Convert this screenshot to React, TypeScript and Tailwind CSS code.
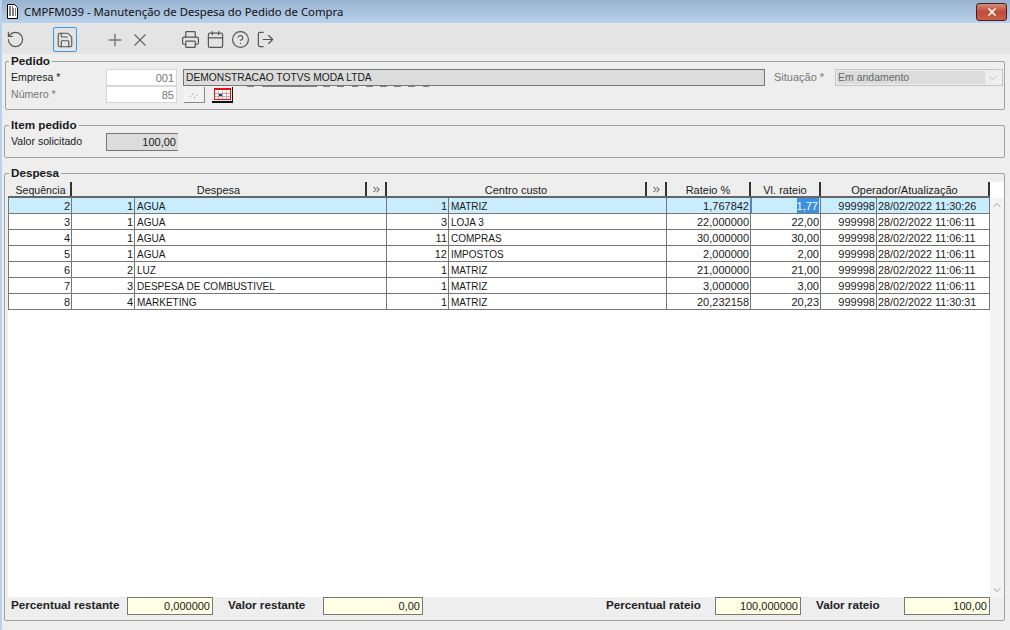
import { Calendar, ChevronDown, ChevronUp, ChevronsRight, CircleHelp, LogOut, Plus, Printer, RotateCcw, Save, X } from "lucide-react";

const rows = [
    ["2", "1", "AGUA", "1", "MATRIZ", "1,767842", "1,77", "999998", "28/02/2022 11:30:26"],
    ["3", "1", "AGUA", "3", "LOJA 3", "22,000000", "22,00", "999998", "28/02/2022 11:06:11"],
    ["4", "1", "AGUA", "11", "COMPRAS", "30,000000", "30,00", "999998", "28/02/2022 11:06:11"],
    ["5", "1", "AGUA", "12", "IMPOSTOS", "2,000000", "2,00", "999998", "28/02/2022 11:06:11"],
    ["6", "2", "LUZ", "1", "MATRIZ", "21,000000", "21,00", "999998", "28/02/2022 11:06:11"],
    ["7", "3", "DESPESA DE COMBUSTIVEL", "1", "MATRIZ", "3,000000", "3,00", "999998", "28/02/2022 11:06:11"],
    ["8", "4", "MARKETING", "1", "MATRIZ", "20,232158", "20,23", "999998", "28/02/2022 11:30:31"],
];

const colWidths = ["w-[63px]", "w-[63px]", "w-[252px]", "w-[62px]", "w-[218px]", "w-[84px]", "w-[70px]", "w-[56px]", "w-[113px]"];
const leftAligned = [2, 4];

function HeaderCell({label, width, more}: { label: string, width: string, more?: boolean }) {
    return <div className={`${width} flex h-full shrink-0 border-r-2 border-[#333]`}>
        <div className="flex-1 text-center leading-[16px]">{label}</div>
        {more && <div className="flex w-[20px] items-center justify-center border-l-2 border-[#333]">
            <ChevronsRight size={11} strokeWidth={2} className="text-[#222]"/>
        </div>}
    </div>
}

function Row({row, index}: { row: string[], index: number }) {
    const selected = index === 0;
    return <div className={`flex h-[16px] border-b border-[#777] ${selected ? "bg-[#c9edfd]" : "bg-white"}`}>
        {row.map((value, key) => {
            const active = selected && key === 6;
            return <div key={key}
                        className={`${colWidths[key]} shrink-0 overflow-hidden whitespace-nowrap border-r border-[#777] leading-[17px] ${leftAligned.includes(key) ? "pl-[2px] text-left text-[10px]" : key === 8 ? "pl-[1px] text-[10.8px]" : "pr-[1px] text-right"} ${active ? "border-l border-l-[#3a8ee0]" : ""}`}>
                {active ? <span className="inline-block h-[15px] bg-[#3d8fe0] pr-[1px] leading-[16px] text-white">{value}</span> : value}
            </div>
        })}
    </div>
}

function Total({label, value, labelWidth, inputWidth}: { label: string, value: string, labelWidth: string, inputWidth: string }) {
    return <div className="flex items-start">
        <div className={`${labelWidth} text-[11.7px] font-bold leading-[16px] text-[#222]`}>{label}</div>
        <div className={`${inputWidth} h-[18px] border border-[#777] bg-[#ffffe6] pr-[2px] text-right leading-[17px]`}>{value}</div>
    </div>
}

export default function App() {
    return <div className="flex h-[630px] w-[1010px] flex-col overflow-hidden border-l-2 border-[#b9d1ea] bg-[#eeeeee] text-[11px] text-[#1a1a1a] [font-family:'Liberation_Sans',Arial,sans-serif]">
        <div className="-ml-[2px] flex h-[23px] shrink-0 items-center bg-gradient-to-b from-[#98b3d0] to-[#b9d1ea] pl-[6px]">
            <svg width="13" height="15" viewBox="0 0 13 15" className="mr-[5px]">
                <path d="M1.5 .5h7l3 3v11h-10z" fill="#fff" stroke="#000"/>
                <path d="M3 3h4M3 5h7M3 7h7M3 9h7M3 11h7" stroke="#000" strokeDasharray="2 1"/>
            </svg>
            <span className="text-[11.35px] text-[#111] [font-family:'Noto_Sans',sans-serif]">CMPFM039 - Manutenção de Despesa do Pedido de Compra</span>
            <div className="ml-auto mr-[3px] flex h-[18px] w-[31px] items-center justify-center rounded-[3px] border border-[#4a1c24] bg-gradient-to-b from-[#d3897a] via-[#bf4a33] to-[#c9614c]">
                <X size={12} strokeWidth={3.5} className="text-white"/>
            </div>
        </div>

        <div className="-ml-[2px] flex h-[31px] shrink-0 items-center bg-[#e4e4e4] pt-[2px] text-[#555]">
            <RotateCcw size={19} strokeWidth={1.5} className="ml-[6px]"/>
            <div className="ml-[28px] flex h-[25px] w-[24px] items-center justify-center rounded-[2px] border border-[#3d97ee]">
                <Save size={18} strokeWidth={1.5}/>
            </div>
            <Plus size={20} strokeWidth={1.7} className="ml-[28px] text-[#777]"/>
            <X size={20} strokeWidth={1.5} className="ml-[5px] text-[#666]"/>
            <Printer size={19} strokeWidth={1.5} className="ml-[31px]"/>
            <Calendar size={19} strokeWidth={1.5} className="ml-[6px]"/>
            <CircleHelp size={19} strokeWidth={1.5} className="ml-[6px]"/>
            <LogOut size={19} strokeWidth={1.5} className="ml-[6px]"/>
        </div>

        <div className="relative ml-[3px] mr-[5px] mt-[7px] h-[49px] shrink-0 rounded-[2px] border border-[#a0a0a0]">
            <div className="absolute -top-[8px] left-[3px] bg-[#eeeeee] px-[2px] text-[11.7px] font-bold leading-[14px]">Pedido</div>
            <div className="ml-[5px] mt-[7px] flex h-[17px]">
                <div className="w-[95px] text-[10.6px] leading-[16px]">Empresa *</div>
                <div className="h-[17px] w-[71px] border border-[#d8d8d8] bg-white pr-[2px] text-right leading-[16px] text-[#777]">001</div>
                <div className="relative ml-[6px] h-[17px] w-[582px] border border-[#777] bg-[#dcdcdc] pl-[2px] text-[10.25px] leading-[15px]">
                    DEMONSTRACAO TOTVS MODA LTDA
                    <svg width="185" height="1" viewBox="0 0 185 1" className="absolute -bottom-[2px] left-[63px]">
                        <path d="M0 .5h7M15 .5h55M76 .5h7M90 .5h7M105 .5h6M119 .5h7M133 .5h7M147 .5h7M161 .5h7M176 .5h6" stroke="#808080"/>
                    </svg>
                </div>
                <div className="ml-[9px] w-[61px] leading-[16px] text-[#777]">Situação *</div>
                <div className="flex h-[17px] w-[168px] items-center border border-[#c4c4c4] bg-[#eeeeee] p-[1px] text-[#666]">
                    <div className="h-full flex-1 bg-[#dcdcdc] pl-[1px] text-[10.5px] leading-[13px]">Em andamento</div>
                    <ChevronDown size={12} strokeWidth={1} className="mx-[2px] text-[#888]"/>
                </div>
            </div>
            <div className="ml-[5px] flex h-[17px]">
                <div className="w-[95px] text-[10.6px] leading-[17px] text-[#777]">Número *</div>
                <div className="h-[17px] w-[71px] border border-[#d8d8d8] bg-white pr-[2px] text-right leading-[16px] text-[#777]">85</div>
                <div className="ml-[7px] mt-[1px] flex h-[16px] w-[21px] items-center justify-center border-b border-r border-[#888] bg-[#f2f2f2]">
                    <svg width="12" height="10" viewBox="0 0 12 10">
                        <path d="M2 7l4-4M6 8l4-4" stroke="#999" strokeDasharray="1.5 1"/>
                    </svg>
                </div>
                <div className="ml-[7px] mt-[1px] flex h-[16px] w-[21px] items-start justify-center border-b-2 border-r border-[#111] pt-[1px]">
                    <svg width="17" height="12" viewBox="0 0 17 12">
                        <rect width="17" height="12" fill="#fff"/>
                        <path d="M4.5 3v8M8.5 3v8M12.5 3v8M1 5.5h15M1 8.5h15" stroke="#c9a5a5"/>
                        <rect width="17" height="2" fill="#e60f0f"/>
                        <rect x=".5" y=".5" width="16" height="11" fill="none" stroke="#e60f0f"/>
                        <rect x="5" y="6" width="3" height="2" fill="#1a3f8a"/>
                    </svg>
                </div>
            </div>
        </div>

        <div className="relative ml-[2px] mr-[5px] mt-[15px] h-[33px] shrink-0 rounded-[2px] border border-[#a0a0a0]">
            <div className="absolute -top-[8px] left-[4px] bg-[#eeeeee] px-[2px] text-[11.7px] font-bold leading-[14px]">Item pedido</div>
            <div className="ml-[6px] mt-[7px] flex h-[18px]">
                <div className="w-[95px] text-[10.6px] leading-[16px]">Valor solicitado</div>
                <div className="h-[18px] w-[72px] border-y border-l border-[#777] bg-[#dcdcdc] pr-[2px] text-right leading-[17px]">100,00</div>
            </div>
        </div>

        <div className="relative ml-[2px] mr-[5px] mt-[15px] flex h-[448px] shrink-0 flex-col rounded-[2px] border border-[#a0a0a0]">
            <div className="absolute -top-[8px] left-[4px] bg-[#eeeeee] px-[2px] text-[11.7px] font-bold leading-[14px]">Despesa</div>
            <div className="ml-[3px] mt-[8px] h-[416px] w-[996px] bg-white">
                <div className="flex h-[16px] w-[982px] border-b-2 border-[#666] bg-[#eeeeee] text-center">
                    <HeaderCell label="Sequência" width="w-[64px] pl-[3px] text-[10.6px]"/>
                    <HeaderCell label="Despesa" width="w-[315px]" more/>
                    <HeaderCell label="Centro custo" width="w-[280px]" more/>
                    <HeaderCell label="Rateio %" width="w-[84px]"/>
                    <HeaderCell label="Vl. rateio" width="w-[70px]"/>
                    <HeaderCell label="Operador/Atualização" width="w-[169px]"/>
                </div>
                <div className="flex h-[400px]">
                    <div className="w-[982px] shrink-0">
                        <div className="w-full border-l border-[#777]">
                            {rows.map((row, key) => <Row row={row} index={key} key={key}/>)}
                        </div>
                    </div>
                    <div className="flex flex-1 flex-col items-center justify-between bg-[#f4f4f4] pb-[2px] pt-[1px] text-[#c4c4c4]">
                        <ChevronUp size={12} strokeWidth={2.5}/>
                        <ChevronDown size={12} strokeWidth={2.5}/>
                    </div>
                </div>
            </div>
            <div className="ml-[6px] mr-[14px] mt-[-1px] flex h-[24px] items-start bg-[#eeeeee]">
                <Total label="Percentual restante" value="0,000000" labelWidth="w-[116px]" inputWidth="w-[86px]"/>
                <div className="w-[15px]"/>
                <Total label="Valor restante" value="0,00" labelWidth="w-[95px]" inputWidth="w-[100px]"/>
                <div className="flex-1"/>
                <Total label="Percentual rateio" value="100,000000" labelWidth="w-[109px]" inputWidth="w-[86px]"/>
                <div className="w-[15px]"/>
                <Total label="Valor rateio" value="100,00" labelWidth="w-[88px]" inputWidth="w-[86px]"/>
            </div>
        </div>
    </div>
}
